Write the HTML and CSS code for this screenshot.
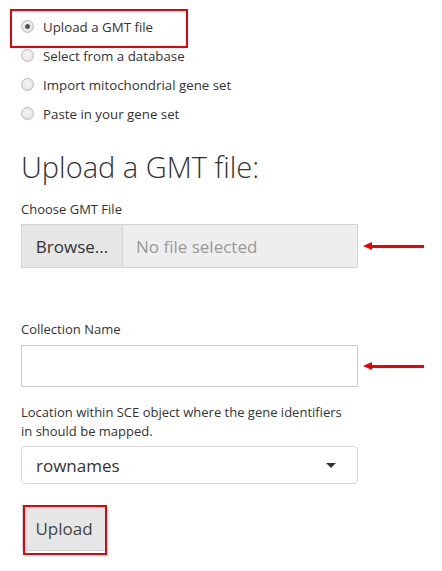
FILE: index.html
```html
<!DOCTYPE html>
<html>
<head>
<meta charset="utf-8">
<link rel="stylesheet" href="styles.css">
</head>
<body>
<div class="page">
  <div class="radios">
    <label class="radio-row marked"><span class="radio checked"></span><span>Upload a GMT file</span></label>
    <label class="radio-row"><span class="radio"></span><span>Select from a database</span></label>
    <label class="radio-row"><span class="radio"></span><span>Import mitochondrial gene set</span></label>
    <label class="radio-row"><span class="radio"></span><span>Paste in your gene set</span></label>
  </div>

  <h2 class="title">Upload a GMT file:</h2>

  <div class="label">Choose GMT File</div>
  <div class="field-row">
    <div class="file-input">
      <span class="browse">Browse...</span>
      <span class="filename">No file selected</span>
    </div>
    <span class="arrow"></span>
  </div>

  <div class="label label-collection">Collection Name</div>
  <div class="field-row">
    <div class="text-input"></div>
    <span class="arrow"></span>
  </div>

  <div class="label label-location">Location within SCE object where the gene identifiers<br>in should be mapped.</div>
  <div class="select">
    <span>rownames</span>
    <span class="caret"></span>
  </div>

  <div class="button-wrap">
    <div class="button">Upload</div>
  </div>
</div>
</body>
</html>
```

FILE: styles.css
```css
* { box-sizing: border-box; }
html, body { margin: 0; padding: 0; background: #fff; }
body {
  font-family: "Open Sans", "DejaVu Sans", sans-serif;
  color: #333;
  width: 442px;
  height: 571px;
  overflow: hidden;
}
.page {
  padding: 12px 0 0 21px;
  display: flex;
  flex-direction: column;
}
.radios {
  display: flex;
  flex-direction: column;
}
.radio-row {
  height: 29px;
  display: flex;
  align-items: center;
  gap: 9px;
  font-size: 13.3px;
  color: #333;
  position: relative;
}
.marked::after {
  content: "";
  position: absolute;
  left: -11px;
  top: -3px;
  width: 174px;
  height: 35px;
  border: 2px solid #e8000b;
}
.radio {
  width: 13px;
  height: 13px;
  border-radius: 50%;
  border: 1px solid #b9b9b9;
  background: radial-gradient(circle at 50% 40%, #f6f6f6 0%, #dcdcdc 100%);
  display: flex;
  align-items: center;
  justify-content: center;
}
.radio.checked::before {
  content: "";
  width: 5px;
  height: 5px;
  border-radius: 50%;
  background: #555;
}
.title {
  margin: 22px 0 0 0;
  font-size: 29px;
  font-weight: 300;
  line-height: 33px;
  color: #333;
}
.label {
  font-size: 13px;
  line-height: 18px;
  margin-top: 17px;
  margin-bottom: 6px;
}
.label-collection { margin-top: 52px; margin-bottom: 7px; }
.label-location {
  width: 360px;
  line-height: 19px;
  margin-top: 16px;
  margin-bottom: 5px;
}
.field-row {
  display: flex;
  align-items: center;
}
.file-input {
  width: 337px;
  height: 44px;
  border: 1px solid #d4d4d4;
  background: #eeeeee;
  display: flex;
  font-size: 17px;
}
.browse {
  width: 101px;
  background: #e6e6e6;
  border-right: 1px solid #d4d4d4;
  display: flex;
  align-items: center;
  justify-content: center;
  color: #333;
}
.filename {
  display: flex;
  align-items: center;
  padding-left: 13px;
  color: #999;
}
.arrow {
  margin-left: 5px;
  width: 61px;
  height: 8px;
  position: relative;
  display: block;
}
.arrow::before {
  content: "";
  position: absolute;
  left: 7px;
  right: 0;
  top: 3px;
  height: 3px;
  background: #f00000;
}
.arrow::after {
  content: "";
  position: absolute;
  left: 0;
  top: 0;
  border-right: 9px solid #f00000;
  border-top: 4.5px solid transparent;
  border-bottom: 4.5px solid transparent;
}
.text-input {
  width: 337px;
  height: 42px;
  border: 1px solid #cccccc;
  background: #fff;
}
.select {
  width: 337px;
  height: 38px;
  border: 1px solid #d9d9d9;
  border-radius: 4px;
  display: flex;
  align-items: center;
  justify-content: space-between;
  padding: 0 21px 0 14px;
  font-size: 17px;
  color: #333;
}
.caret {
  width: 0;
  height: 0;
  border-top: 5px solid #333;
  border-left: 5px solid transparent;
  border-right: 5px solid transparent;
}
.button-wrap {
  margin-top: 21px;
  display: flex;
}
.button {
  margin-left: 1px;
  width: 84px;
  height: 46px;
  background: #e6e6e6;
  border: 1px solid #cfcfcf;
  display: flex;
  align-items: center;
  justify-content: center;
  font-size: 17px;
  color: #444;
  position: relative;
}
.button::after {
  content: "";
  position: absolute;
  left: 0;
  top: -1px;
  width: 80px;
  height: 46px;
  border: 2px solid #e8000b;
}
```
